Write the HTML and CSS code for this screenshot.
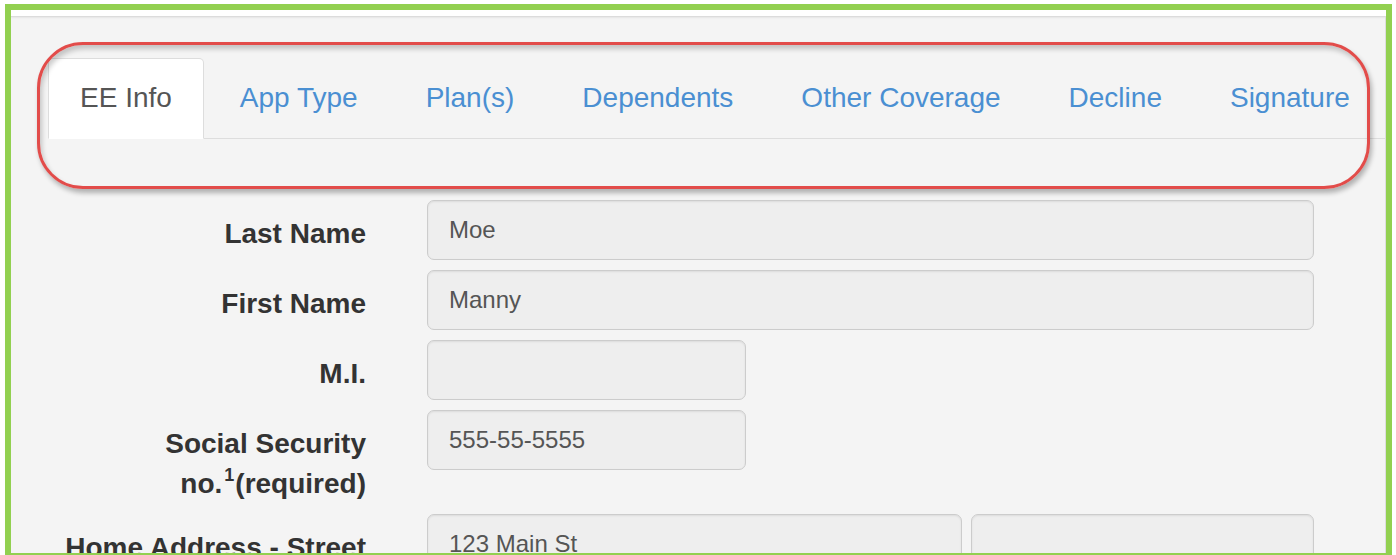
FILE: index.html
```html
<!DOCTYPE html>
<html lang="en">
<head>
<meta charset="utf-8">
<title>Enrollment - EE Info</title>
<link rel="stylesheet" href="styles.css">
</head>
<body>
<div class="frame">
  <div class="topbar"></div>
  <div class="content">
    <ul class="tabs">
      <li class="tab active"><a>EE Info</a></li>
      <li class="tab"><a>App Type</a></li>
      <li class="tab"><a>Plan(s)</a></li>
      <li class="tab"><a>Dependents</a></li>
      <li class="tab"><a>Other Coverage</a></li>
      <li class="tab"><a>Decline</a></li>
      <li class="tab"><a>Signature</a></li>
    </ul>

    <form class="form">
      <label class="label">Last Name</label>
      <div class="field"><input class="control" type="text" value="Moe" disabled></div>

      <label class="label">First Name</label>
      <div class="field"><input class="control" type="text" value="Manny" disabled></div>

      <label class="label">M.I.</label>
      <div class="field"><input class="control short" type="text" value="" disabled></div>

      <label class="label">Social Security <span class="keep">no.<sup>1</sup>(required)</span></label>
      <div class="field"><input class="control short" type="text" value="555-55-5555" disabled></div>

      <label class="label nowrap">Home Address - Street</label>
      <div class="field split">
        <input class="control street" type="text" value="123 Main St" disabled>
        <input class="control unit" type="text" value="" disabled>
      </div>
    </form>
  </div>
  <div class="callout"></div>
</div>
</body>
</html>
```

FILE: styles.css
```css
html, body {
  margin: 0;
  padding: 0;
  background: #ffffff;
}

body {
  font-family: "Liberation Sans", Arial, sans-serif;
  overflow: hidden;
}

/* green outline around the captured page */
.frame {
  position: relative;
  margin: 4px 0 0 5px;
  width: 1375px;
  height: 543px;
  border: 6px solid #92d050;
  overflow: hidden;
  background: #f4f4f4;
}

.topbar {
  height: 6px;
  background: #ffffff;
  border-bottom: 1px solid #dcdcdc;
  box-shadow: 0 1px 2px rgba(0, 0, 0, 0.06);
}

.content {
  padding: 41px 0 0 37px;
  border-right: 1px solid #dddddd;
  height: 100%;
}

/* nav tabs */
.tabs {
  display: flex;
  list-style: none;
  margin: 0;
  padding: 0;
  border-bottom: 1px solid #dddddd;
}

.tab {
  margin: 0 4px -1px 0;
}

.tab a {
  display: block;
  padding: 19px 31px 20px;
  line-height: 40px;
  font-size: 28px;
  color: #4a8fd2;
  border: 1px solid transparent;
  border-radius: 5px 5px 0 0;
  white-space: nowrap;
}

.tab.active a {
  color: #555555;
  background: #ffffff;
  border-color: #dddddd #dddddd transparent;
}

/* horizontal form */
.form {
  display: grid;
  grid-template-columns: 318px 887px;
  column-gap: 61px;
  row-gap: 10px;
  margin-top: 61px;
}

.label {
  padding-top: 14px;
  text-align: right;
  font-size: 28px;
  line-height: 40px;
  font-weight: bold;
  color: #333333;
}

.label .keep {
  white-space: nowrap;
}

.label sup {
  display: inline-block;
  margin: 0 1px 0 2px;
  font-size: 18px;
  line-height: 18px;
  vertical-align: 12px;
}

.nowrap {
  white-space: nowrap;
  direction: rtl;
}

.field {
  display: flex;
}

.split {
  gap: 9px;
}

.control {
  box-sizing: border-box;
  width: 100%;
  height: 60px;
  margin: 0;
  padding: 0 21px;
  font-family: "Liberation Sans", Arial, sans-serif;
  font-size: 24px;
  color: #555555;
  -webkit-text-fill-color: #555555;
  background: #eeeeee;
  border: 1px solid #cccccc;
  border-radius: 7px;
  box-shadow: inset 0 1px 2px rgba(0, 0, 0, 0.08);
  opacity: 1;
}

.control.short {
  width: 319px;
}

.control.street {
  width: 535px;
}

.control.unit {
  width: 343px;
}

/* red highlight drawn over the tab strip */
.callout {
  position: absolute;
  left: 26px;
  top: 32px;
  width: 1327px;
  height: 141px;
  border: 3px solid #e24c4a;
  border-radius: 46px;
  box-shadow: 2px 4px 5px rgba(0, 0, 0, 0.28), inset 2px 4px 5px rgba(0, 0, 0, 0.2);
  pointer-events: none;
}
```
